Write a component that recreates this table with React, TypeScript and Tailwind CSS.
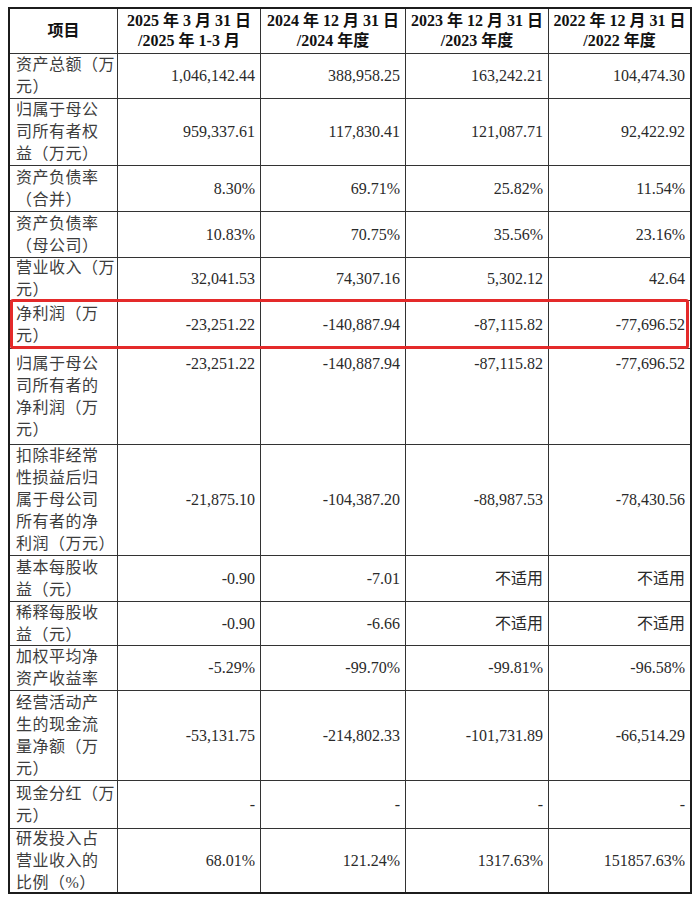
import React from "react";

type Row = { label: string[]; vals: string[]; h: string; top?: boolean };

const rows: Row[] = [
  { label: ["资产总额（万", "元）"], vals: ["1,046,142.44", "388,958.25", "163,242.21", "104,474.30"], h: "h-[45px]" },
  { label: ["归属于母公", "司所有者权", "益（万元）"], vals: ["959,337.61", "117,830.41", "121,087.71", "92,422.92"], h: "h-[67px]" },
  { label: ["资产负债率", "（合并）"], vals: ["8.30%", "69.71%", "25.82%", "11.54%"], h: "h-[46px]" },
  { label: ["资产负债率", "（母公司）"], vals: ["10.83%", "70.75%", "35.56%", "23.16%"], h: "h-[46px]" },
  { label: ["营业收入（万", "元）"], vals: ["32,041.53", "74,307.16", "5,302.12", "42.64"], h: "h-[43px]" },
  { label: ["净利润（万", "元）"], vals: ["-23,251.22", "-140,887.94", "-87,115.82", "-77,696.52"], h: "h-[48px]" },
  { label: ["归属于母公", "司所有者的", "净利润（万", "元）"], vals: ["-23,251.22", "-140,887.94", "-87,115.82", "-77,696.52"], h: "h-[96px]", top: true },
  { label: ["扣除非经常", "性损益后归", "属于母公司", "所有者的净", "利润（万元）"], vals: ["-21,875.10", "-104,387.20", "-88,987.53", "-78,430.56"], h: "h-[111px]" },
  { label: ["基本每股收", "益（元）"], vals: ["-0.90", "-7.01", "不适用", "不适用"], h: "h-[46px]" },
  { label: ["稀释每股收", "益（元）"], vals: ["-0.90", "-6.66", "不适用", "不适用"], h: "h-[44px]" },
  { label: ["加权平均净", "资产收益率"], vals: ["-5.29%", "-99.70%", "-99.81%", "-96.58%"], h: "h-[45px]" },
  { label: ["经营活动产", "生的现金流", "量净额（万", "元）"], vals: ["-53,131.75", "-214,802.33", "-101,731.89", "-66,514.29"], h: "h-[90px]" },
  { label: ["现金分红（万", "元）"], vals: ["-", "-", "-", "-"], h: "h-[48px]" },
  { label: ["研发投入占", "营业收入的", "比例（%）"], vals: ["68.01%", "121.24%", "1317.63%", "151857.63%"], h: "h-[64px]" },
];

const headers = [
  ["2025 年 3 月 31 日", "/2025 年 1-3 月"],
  ["2024 年 12 月 31 日", "/2024 年度"],
  ["2023 年 12 月 31 日", "/2023 年度"],
  ["2022 年 12 月 31 日", "/2022 年度"],
];

const font = "font-['Liberation_Serif','Noto_Sans_CJK_SC',serif]";

export default function App() {
  return (
    <div className={`w-[700px] h-[899px] bg-white pl-[8px] pt-[7px] ${font}`}>
      <div className="relative w-[684px] border-2 border-[#1c1c1c]">
        <div className="grid grid-cols-[107px_143px_145px_143px_142px]">
          {/* header */}
          <div className="h-[44px] flex items-center justify-center text-[16px] font-bold text-[#111]">项目</div>
          {headers.map((hd, i) => (
            <div
              key={i}
              className="h-[44px] border-l border-[#333] flex flex-col items-center justify-center text-[16px] leading-[20px] font-bold text-[#111] whitespace-nowrap"
            >
              <span>{hd[0]}</span>
              <span>{hd[1]}</span>
            </div>
          ))}
          {rows.map((r, ri) => (
            <React.Fragment key={ri}>
              <div
                className={`${r.h} border-t border-[#333] flex flex-col justify-center pl-[6px] text-[16px] leading-[22px] tracking-[0.5px] text-[#3d3d3d] whitespace-nowrap`}
              >
                {r.label.map((l, li) => (
                  <span key={li}>{l}</span>
                ))}
              </div>
              {r.vals.map((v, vi) => (
                <div
                  key={vi}
                  className={`${r.h} border-t border-l border-[#333] flex ${
                    r.top ? "items-start pt-[4px]" : "items-center"
                  } justify-end pr-[5px] text-[16px] leading-[22px] text-[#2a2a2a] whitespace-nowrap`}
                >
                  {v}
                </div>
              ))}
            </React.Fragment>
          ))}
        </div>
        <div className="absolute left-0 top-[290px] w-[679px] h-[50px] border-[3px] border-[#e42a2a] rounded-[3px] pointer-events-none" />
      </div>
    </div>
  );
}
